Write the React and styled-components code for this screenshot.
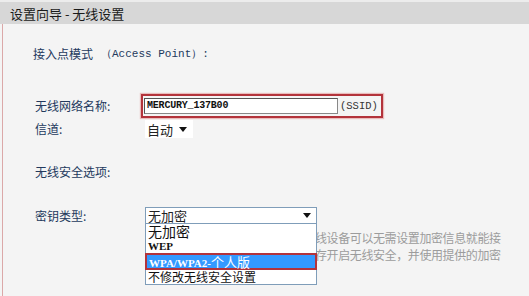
import React from 'react';
import styled, { createGlobalStyle } from 'styled-components';

const Global = createGlobalStyle`
  html, body { margin: 0; padding: 0; background: #f4f4f4; }
  body {
    font-family: "Noto Sans CJK SC", "Liberation Sans", sans-serif;
    width: 529px; height: 296px; overflow: hidden;
  }
`;

const Page = styled.div`
  width: 529px;
  height: 296px;
  display: flex;
  flex-direction: column;
  background: #f4f4f4;
  border-top: 2px solid #ececec;
  box-sizing: border-box;
`;

const TitleBar = styled.div`
  height: 22px;
  flex: none;
  background: #d7d7d7;
  display: flex;
  align-items: center;
  padding-left: 10px;
  font-size: 13px;
  color: #1a1a1a;
  white-space: pre;
`;

const Panel = styled.div`
  flex: 1;
  margin-left: 2px;
  border-left: 1px solid #dba8a8;
  padding-left: 30px;
  display: flex;
  flex-direction: column;
`;

const Section = styled.div`
  margin-top: ${p => p.$top}px;
  height: 16px;
  line-height: 16px;
  font-size: 12px;
  color: #23395d;
  display: flex;
  align-items: center;
  padding-left: ${p => p.$indent || 0}px;
`;

const Mono = styled.span`
  font-family: "Liberation Mono", monospace;
  font-size: 11px;
  margin-left: 8px;
  color: #23395d;
`;

const Row = styled.div`
  margin-top: ${p => p.$top}px;
  display: flex;
  align-items: center;
  padding-left: 2px;
`;

const Label = styled.div`
  width: 110px;
  flex: none;
  font-size: 12px;
  line-height: 16px;
  color: #23395d;
`;

const Highlight = styled.div`
  margin-left: -4px;
  display: flex;
  align-items: center;
  border: 2px solid #b3333b;
  box-shadow: 0 0 1px 1px rgba(220, 120, 120, 0.45);
  padding: 2px 3px 2px 1px;
`;

const TextInput = styled.div`
  width: 194px;
  height: 16px;
  box-sizing: border-box;
  background: #fff;
  border: 1px solid #555;
  border-right-color: #888;
  border-bottom-color: #888;
  font-family: "Liberation Mono", monospace;
  font-size: 10px;
  font-weight: bold;
  line-height: 14px;
  padding-left: 2px;
  color: #111;
  letter-spacing: -0.2px;
`;

const Suffix = styled.span`
  margin-left: 2px;
  font-family: "Liberation Mono", monospace;
  font-size: 10.5px;
  color: #333;
`;

const PlainSelect = styled.div`
  width: 48px;
  height: 18px;
  background: #fff;
  display: flex;
  align-items: center;
  justify-content: space-between;
  padding: 0 6px 0 2px;
  box-sizing: border-box;
  font-size: 13px;
  color: #222;
`;

const Combo = styled.div`
  position: relative;
  width: 172px;
`;

const SelectBox = styled.div`
  height: 17px;
  box-sizing: border-box;
  border: 1px solid #7f9db9;
  background: #fff;
  display: flex;
  align-items: center;
  justify-content: space-between;
  padding: 0 5px 0 2px;
  font-size: 13px;
  line-height: 15px;
  color: #222;
`;

const List = styled.div`
  position: absolute;
  top: 17px;
  left: 0;
  width: 172px;
  box-sizing: border-box;
  border: 1px solid #7f9db9;
  border-top: none;
  background: #fff;
  display: flex;
  flex-direction: column;
  z-index: 2;
`;

const Item = styled.div`
  height: ${p => p.$h}px;
  line-height: ${p => p.$h}px;
  padding-left: 2px;
  font-size: ${p => p.$size || 13}px;
  font-family: ${p => p.$latin ? '"Liberation Serif", "Noto Sans CJK SC", serif' : '"Noto Sans CJK SC", sans-serif'};
  font-weight: ${p => p.$latin ? 'bold' : 'normal'};
  color: #111;
  white-space: nowrap;
`;

const ActiveItem = styled(Item)`
  margin: 0 -1px;
  border: 2px solid #b3333b;
  background: #3399ff;
  color: #fff;
  line-height: 13px;
  font-weight: normal;
  font-family: "Noto Sans CJK SC", sans-serif;
  box-sizing: border-box;
`;

const Bold = styled.span`
  font-family: "Liberation Serif", serif;
  font-weight: bold;
  font-size: 11px;
`;

const Help = styled.div`
  margin-top: 5px;
  margin-left: 282px;
  font-size: 12px;
  line-height: 17px;
  color: #9c9c9c;
  letter-spacing: -0.4px;
  white-space: nowrap;
`;

const Arrow = () => (
  <svg width="8" height="5" viewBox="0 0 8 5">
    <path d="M0 0 H8 L4 5 Z" fill="#111" />
  </svg>
);

export default function App() {
  return (
    <>
      <Global />
      <Page>
        <TitleBar>设置向导 - 无线设置</TitleBar>
        <Panel>
          <Section $top={22}>
            接入点模式<Mono>（Access Point）:</Mono>
          </Section>

          <Row $top={32}>
            <Label>无线网络名称:</Label>
            <Highlight>
              <TextInput>MERCURY_137B00</TextInput>
              <Suffix>(SSID)</Suffix>
            </Highlight>
          </Row>

          <Row $top={2}>
            <Label>信道:</Label>
            <PlainSelect>
              <span>自动</span>
              <Arrow />
            </PlainSelect>
          </Row>

          <Section $top={26} $indent={2}>无线安全选项:</Section>

          <Row $top={27}>
            <Label>密钥类型:</Label>
            <Combo>
              <SelectBox>
                <span>无加密</span>
                <Arrow />
              </SelectBox>
              <List>
                <Item $h={15} $size={14}>无加密</Item>
                <Item $h={14} $size={11} $latin>WEP</Item>
                <ActiveItem $h={17}>
                  <Bold>WPA/WPA2-</Bold>个人版
                </ActiveItem>
                <Item $h={14} $size={12}>不修改无线安全设置</Item>
              </List>
            </Combo>
          </Row>

          <Help>
            线设备可以无需设置加密信息就能接
            <br />
            存开启无线安全，并使用提供的加密
          </Help>
        </Panel>
      </Page>
    </>
  );
}
